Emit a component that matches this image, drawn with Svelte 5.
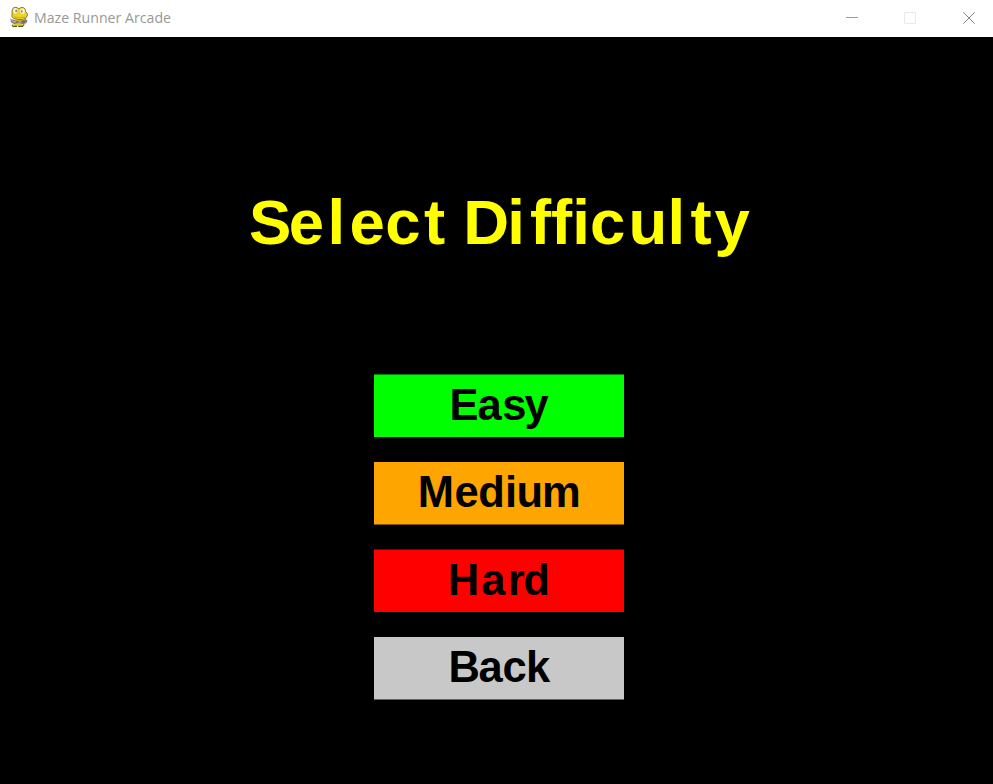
<script>
  const title = {
    label: 'Select Difficulty',
    x: [249, 288.8, 327.5, 349.4, 385.3, 424, 446, 463.3, 507.2, 530.1, 551.1, 572.2, 590, 628.4, 667.4, 690.4, 714.6]
  };
  const options = [
    { label: 'Easy', color: '#00ff00', y: 0.5, base: 45.5, x: [75.6, 103.4, 128.2, 150.6] },
    { label: 'Medium', color: '#ffa500', y: 0, base: 45.2, x: [43.8, 80.4, 104.2, 131.1, 142.4, 168.1] },
    { label: 'Hard', color: '#ff0000', y: 0.5, base: 45.5, x: [73.7, 107.2, 133.8, 149.2] },
    { label: 'Back', color: '#c8c8c8', y: 0, base: 45, x: [74.5, 104.6, 128.4, 152.1] }
  ];
</script>

<div class="window">
  <header>
    <svg class="logo" width="20" height="22" viewBox="0 0 20 22">
      <path d="M4 13.5h9.5l.8 3-1.2 3.8H6l-2-2.3Z" fill="#e6c91e" />
      <path d="M3.2 18.8 4 20.3h4m1.2 0h4.3l1.8-2" fill="none" stroke="#5f571f" stroke-width="1.2" />
      <path d="M1.4 12.4 4.5 14l4 .8 4.5-.3 3.6-1.6 2 1.8-1.4 2.5-3.2 1.1-4-1.2-4.4 1-3.6-1.6Z" fill="#807e79" />
      <path d="m2.3 13.5 2 2.2 2.5.3m3-.2 2 .2" stroke="#cbcac5" fill="none" />
      <path d="M13.3 15.7h2.2" stroke="#b14747" stroke-width="1.4" />
      <path d="M3.2 4Q4 .8 7 1.2q2 .2 2.8 1.7Q11.8.7 14.3 1.6q2.5 1 2.2 4 2 1.2 2 3.5Q18 13 13.5 13.5q-5 .5-9-1.2Q2 11.2 3 8.5Z" fill="#efd522" stroke="#6e6427" stroke-width=".8" />
      <ellipse cx="6.2" cy="4.8" rx="2" ry="2.7" fill="#f5f5ee" />
      <ellipse cx="13.5" cy="5.3" rx="2.3" ry="2.7" fill="#f5f5ee" />
      <path d="M7.1 3.8v2.2M12.8 4.3v2.2" stroke="#444" />
      <path d="M5 10.7q5 2 11 .4" fill="none" stroke="#b89d19" stroke-width=".7" />
    </svg>
    <svg class="caption" width="180" height="36"><text x="0" y="23" textLength="137" lengthAdjust="spacingAndGlyphs">Maze Runner Arcade</text></svg>
    <div class="controls">
      <svg viewBox="0 0 12 12"><path d="M0 5.5h12" stroke="#999" /></svg>
      <svg class="maximize" viewBox="0 0 12 12"><path d="M.5 .5h11v11H.5Z" fill="none" stroke="#e8e8e8" /></svg>
      <svg viewBox="0 0 12 12"><path d="m.3.3 11.4 11.4M11.7.3.3 11.7" stroke="#858585" /></svg>
    </div>
  </header>
  <main>
    <h1><svg width="993" height="90"><text x={title.x.join(' ')} y="63.6">{title.label}</text></svg></h1>
    <nav>
      {#each options as option}
        <button>
          <svg width="250" height="63">
            <rect width="250" height="62.5" y={option.y} fill={option.color} />
            <text x={option.x.join(' ')} y={option.base}>{option.label}</text>
          </svg>
        </button>
      {/each}
    </nav>
  </main>
</div>

<style>
  .window { width: 993px; height: 784px; background: #000; overflow: hidden; }
  svg { display: block; }
  header { height: 37px; box-sizing: border-box; display: flex; background: #fff; }
  .logo { margin: 6px 5px 0 9px; }
  .caption text { font: 15px "Open Sans", sans-serif; fill: #999; }
  .controls { margin: 12px 18px 0 auto; display: flex; gap: 46px; }
  .controls svg { width: 12px; height: 12px; }
  .controls .maximize { margin-right: 1px; }
  main { padding-top: 143px; }
  h1 { margin: 0; height: 90px; }
  h1 text { font: bold 63.5px "Liberation Sans", Arial, sans-serif; fill: #ff0; }
  nav { width: 250px; margin: 104px 0 0 374px; display: grid; grid-template-rows: 88px 87px 88px 63px; }
  button { display: block; width: 250px; height: 63px; border: 0; padding: 0; background: none; }
  button text { font: bold 43.5px "Liberation Sans", Arial, sans-serif; fill: #000; }
</style>
